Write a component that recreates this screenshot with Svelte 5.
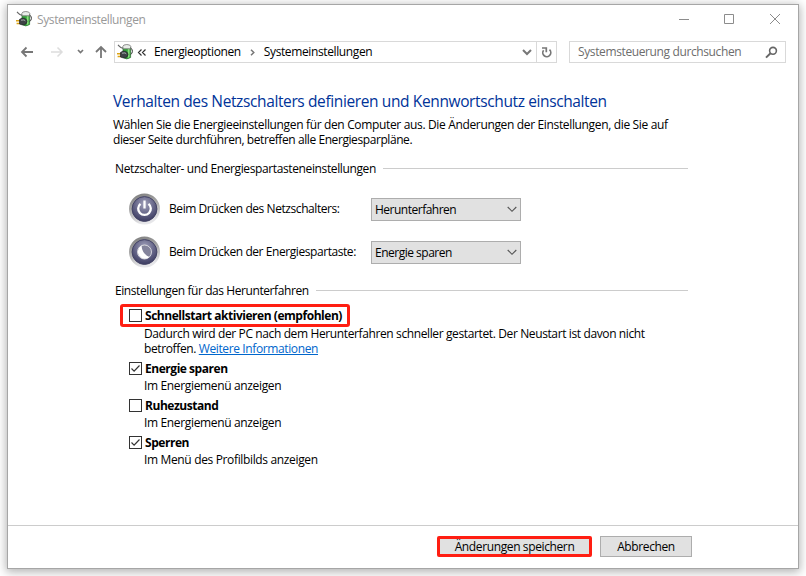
<script>
  const actions = [
    { label: "Beim Drücken des Netzschalters:", value: "Herunterfahren", icon: "power" },
    { label: "Beim Drücken der Energiespartaste:", value: "Energie sparen", icon: "moon" },
  ];

  let options = $state([
    { name: "Energie sparen", hint: "Im Energiemenü anzeigen", checked: true },
    { name: "Ruhezustand", hint: "Im Energiemenü anzeigen", checked: false },
    { name: "Sperren", hint: "Im Menü des Profilbilds anzeigen", checked: true },
  ]);

  let fastStart = $state(false);
</script>

{#snippet plug()}
  <svg class="plug" width="16" height="16" viewBox="0 0 16 16">
    <path d="M6.500 4.500C4 4.500 3 3 1 .8" fill="none" stroke="#666" stroke-width="1.200" />
    <path d="M6 3v10.500q3.800 2.800 7.600 0V3z" fill="#34a83a" stroke="#2b6b31" stroke-width=".7" />
    <path d="M10.800 5h1.700v8.300l-1.700.8z" fill="#8be07d" />
    <path d="M5.800 2.500Q6 .6 9.800.5q3.800.1 4 2l-.3 2.300H6.200z" fill="#e8ece8" stroke="#777" stroke-width=".8" />
    <path d="M13.600 4.200q2 .6 1.800 3.300-.3 2.300-1.800 3" fill="none" stroke="#333" stroke-width="1" />
    <path d="M0 9.800h4M.6 12.600h4" stroke="#dda516" stroke-width="1.500" />
    <path d="M3.500 8.400l2.500-1.200h2.300q2.500.8 2.700 3.200-.2 2.800-2.700 3.400H6l-2.500-.8z" fill="#3d4245" stroke="#1c2022" stroke-width=".7" />
    <path d="M5 9.200l3-.3 1.300 1" fill="none" stroke="#a6adad" stroke-width="1" />
  </svg>
{/snippet}

{#snippet check(on)}
  <span class="box" role="checkbox" aria-checked={on} aria-label="Option">
    {#if on}
      <svg width="11" height="11" viewBox="0 0 11 11">
        <path d="M1.500 5.500l2.600 2.600L9.500 2.500" fill="none" stroke="#333" stroke-width="1.200" />
      </svg>
    {/if}
  </span>
{/snippet}

<div class="window">
  <header>
    {@render plug()}
    <span class="title">Systemeinstellungen</span>
    <svg class="controls" width="104" height="12" viewBox="0 0 104 12" fill="none" stroke="#8c8c8c">
      <path d="M0 6.500h10M45.500 1.500h9v9h-9zM91 1l10 10M101 1L91 11" />
    </svg>
  </header>

  <nav>
    <svg class="arrows" width="88" height="16" viewBox="0 0 88 16" fill="none" stroke="#777" stroke-width="1.800">
      <path d="M13 8H2M6.500 3.500L2 8l4.500 4.500" />
      <path d="M31 8h11M37.500 3.500L42 8l-4.500 4.500" stroke="#ddd" stroke-width="1.500" />
      <path d="M58 6l2.500 2.500L63 6" stroke-width="1.700" />
      <path d="M81 14V3M76 8l5-5 5 5" />
    </svg>
    <div class="address">
      {@render plug()}
      <svg class="back" width="10" height="9" viewBox="0 0 10 9" fill="none" stroke="#333" stroke-width="1.200">
        <path d="M4.500 1.500l-3 3 3 3M8.500 1.500l-3 3 3 3" />
      </svg>
      <span>Energieoptionen</span>
      <svg class="sep" width="5" height="7" viewBox="0 0 5 7" fill="none" stroke="#777" stroke-width="1.500">
        <path d="M1 .7l2.800 2.800L1 6.300" />
      </svg>
      <span>Systemeinstellungen</span>
      <svg class="drop" width="10" height="7" viewBox="0 0 10 7" fill="none" stroke="#777" stroke-width="2">
        <path d="M1 1l4 4 4-4" />
      </svg>
      <div class="refresh">
        <svg width="12" height="13" viewBox="0 0 12 13" fill="none" stroke="#777" stroke-width="1.700">
          <path d="M2.600 4.200A4 4 0 1 0 8.500 3.700" />
          <path d="M1 2h4.300v4.200" />
        </svg>
      </div>
    </div>
    <div class="search">
      <span>Systemsteuerung durchsuchen</span>
      <svg width="13" height="13" viewBox="0 0 13 13" fill="none" stroke="#666">
        <circle cx="8" cy="4.800" r="3.400" stroke-width="1.600" />
        <path d="M5.500 7.300L1 11.600" stroke-width="2" />
      </svg>
    </div>
  </nav>

  <main>
    <h1>Verhalten des Netzschalters definieren und Kennwortschutz einschalten</h1>
    <p class="intro">
      <span>Wählen Sie die Energieeinstellungen für den Computer aus. Die Änderungen der Einstellungen, die Sie auf</span>
      <span class="tight">dieser Seite durchführen, betreffen alle Energiesparpläne.</span>
    </p>

    <div class="group g1"><span>Netzschalter- und Energiespartasteneinstellungen</span></div>

    {#each actions as action}
      <div class="action">
        <svg width="32" height="32" viewBox="0 0 32 32">
          <defs>
            <linearGradient id="ring-{action.icon}" x1="0" y1="0" x2="0.3" y2="1">
              <stop offset="0" stop-color="#777" />
              <stop offset="0.500" stop-color="#aaa" />
              <stop offset="1" stop-color="#e6e6e9" />
            </linearGradient>
            <radialGradient id="face-{action.icon}" cx="0.500" cy="0.300" r="0.700">
              <stop offset="0" stop-color="#a2a2bb" />
              <stop offset="0.600" stop-color="#626285" />
              <stop offset="1" stop-color="#3c3c61" />
            </radialGradient>
          </defs>
          <circle cx="15.500" cy="16" r="15.500" fill="url(#ring-{action.icon})" />
          <circle cx="15.500" cy="16" r="12.400" fill="url(#face-{action.icon})" stroke="#434365" />
          {#if action.icon === "power"}
            <path d="M11.500 10.800a6.300 6.300 0 1 0 8 0" fill="none" stroke="#fff" stroke-width="2.300" />
            <path d="M15.500 7.500v8" stroke="#fff" stroke-width="2.300" />
          {:else}
            <circle cx="15.500" cy="16" r="7" fill="#84849c" stroke="#eee" stroke-width=".8" />
            <path d="M12.500 9.600A7 7 0 1 0 20.500 21Q13 18 12.500 9.600z" fill="#fff" />
          {/if}
        </svg>
        <span class="label">{action.label}</span>
        <div class="select">
          <span>{action.value}</span>
          <svg width="10" height="7" viewBox="0 0 10 7" fill="none" stroke="#555" stroke-width="1.100">
            <path d="M.7 1L5 5.300 9.300 1" />
          </svg>
        </div>
      </div>
    {/each}

    <div class="group g2"><span>Einstellungen für das Herunterfahren</span></div>

    <div class="option marked">
      {@render check(fastStart)}
      <b>Schnellstart aktivieren (empfohlen)</b>
    </div>
    <p class="detail">
      <span>Dadurch wird der PC nach dem Herunterfahren schneller gestartet. Der Neustart ist davon nicht</span>
      <span>betroffen. <u>Weitere Informationen</u></span>
    </p>

    {#each options as option}
      <div class="option">
        {@render check(option.checked)}
        <b>{option.name}</b>
      </div>
      <p class="hint">{option.hint}</p>
    {/each}
  </main>

  <footer>
    <button class="save">Änderungen speichern</button>
    <button class="cancel">Abbrechen</button>
  </footer>
</div>

<style>
  :global(body) {
    background: #fff;
    overflow: hidden;
  }

  .window {
    box-sizing: border-box;
    width: 792px;
    height: 565px;
    margin: 4px 7px 7px;
    border: 1px solid #a6a6a6;
    background: #fff;
    box-shadow: 0 2px 9px 1px rgba(0, 0, 0, 0.3);
    display: flex;
    flex-direction: column;
    font: 12px/15px "Open Sans", "Noto Sans", sans-serif;
    letter-spacing: -0.38px;
    color: #000;
    white-space: nowrap;
  }

  svg {
    display: block;
    flex: none;
  }

  header {
    display: flex;
    align-items: center;
    height: 28px;
    padding: 0 15px 0 8px;
    color: #999;
  }

  .title {
    margin-left: 5px;
  }

  .controls {
    margin-left: auto;
  }

  nav {
    display: flex;
    align-items: center;
    height: 22px;
    margin-top: 8px;
    padding-left: 12px;
  }

  nav span {
    padding-bottom: 1px;
  }

  .address,
  .search {
    box-sizing: border-box;
    height: 22px;
    border: 1px solid #d9d9d9;
    display: flex;
    align-items: center;
  }

  .address {
    width: 443px;
    margin-left: 6px;
    padding-left: 2px;
  }

  .address .plug {
    margin-top: -1px;
  }

  .back {
    margin: 0 7px 0 4px;
  }

  .sep {
    margin: 0 9px;
  }

  .drop {
    margin-left: auto;
    margin-right: 4px;
  }

  .refresh {
    height: 20px;
    width: 19px;
    border-left: 1px solid #d9d9d9;
    display: grid;
    place-items: center;
  }

  .search {
    width: 217px;
    margin-left: 12px;
    padding: 0 7px 0 8px;
    justify-content: space-between;
    color: #6d6d6d;
  }

  main {
    flex: 1;
    padding-left: 105px;
  }

  h1 {
    margin: 27px 0 0;
    font-size: 15.5px;
    font-weight: 400;
    line-height: 22px;
    color: #003399;
  }

  p {
    margin: 0;
  }

  p span {
    display: block;
  }

  .intro {
    margin-top: 5px;
    letter-spacing: -0.345px;
  }

  .intro .tight {
    letter-spacing: -0.42px;
  }

  .group {
    display: flex;
    align-items: center;
    gap: 7px;
    width: 573px;
    padding-left: 2px;
  }

  .group::after {
    content: "";
    flex: 1;
    height: 1px;
    background: #ccc;
  }

  .g1 {
    margin: 14px 0 16px;
  }

  .g2 {
    margin: 15px 0 6px;
    letter-spacing: -0.42px;
  }

  .action {
    display: flex;
    align-items: center;
    height: 33px;
    margin-bottom: 10px;
    padding-left: 16px;
    letter-spacing: -0.43px;
  }

  .label {
    width: 202px;
    margin-left: 8px;
  }

  .select {
    box-sizing: border-box;
    width: 150px;
    height: 23px;
    margin-top: 1px;
    padding: 0 3px;
    border: 1px solid #adadad;
    background: #e1e1e1;
    display: flex;
    align-items: center;
    justify-content: space-between;
    letter-spacing: -0.5px;
  }

  .option {
    display: flex;
    align-items: center;
    height: 17px;
    padding-left: 16px;
  }

  .option b {
    margin-left: 3px;
    letter-spacing: -0.46px;
  }

  .marked {
    box-sizing: border-box;
    width: 230px;
    height: 23px;
    margin-left: 7px;
    padding-left: 6px;
    border: 3px solid #ff1e12;
    border-radius: 3px;
  }

  .box {
    box-sizing: border-box;
    width: 13px;
    height: 13px;
    border: 1px solid #333;
    background: #fff;
  }

  .detail {
    margin: -1px 0 4px 31px;
  }

  .hint {
    height: 20px;
    line-height: 17px;
    margin-left: 31px;
    letter-spacing: -0.35px;
  }

  u {
    color: #0066cc;
  }

  footer {
    display: flex;
    gap: 8px;
    height: 43px;
    box-sizing: border-box;
    padding: 10px 106px 0 0;
    justify-content: flex-end;
    border-top: 1px solid #ccc;
  }

  button {
    box-sizing: border-box;
    height: 21px;
    padding: 0;
    border: 1px solid #adadad;
    background: #e1e1e1;
    font: inherit;
    letter-spacing: inherit;
    color: #000;
  }

  .save {
    width: 155px;
    border: 3px solid #ff1e12;
    border-radius: 2px;
  }

  .cancel {
    width: 92px;
  }
</style>
